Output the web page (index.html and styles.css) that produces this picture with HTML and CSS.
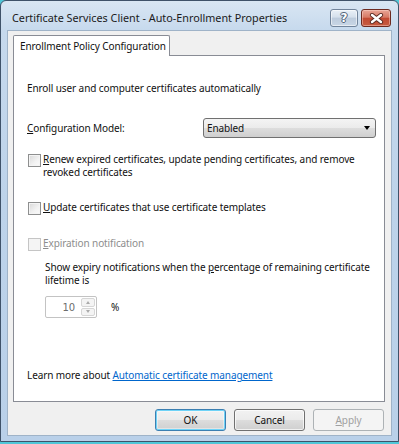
FILE: index.html
```html
<!DOCTYPE html>
<html>
<head>
<meta charset="utf-8">
<link rel="stylesheet" href="styles.css">
</head>
<body>
<div class="window">
  <div class="titlebar">
    <span class="title">Certificate Services Client - Auto-Enrollment Properties</span>
    <div class="caption-btns">
      <div class="cbtn help"><span class="q">?</span></div>
      <div class="cbtn close">
        <svg width="15" height="11" viewBox="0 0 15 11">
          <path d="M3 2 L12 9 M12 2 L3 9" stroke="#5a2a22" stroke-width="4.2" stroke-linecap="round"/>
          <path d="M3 2 L12 9 M12 2 L3 9" stroke="#ffffff" stroke-width="2.4" stroke-linecap="round"/>
        </svg>
      </div>
    </div>
  </div>
  <div class="client">
    <div class="tabs"><div class="tab">Enrollment Policy Configuration</div></div>
    <div class="panel">
      <p class="intro">Enroll user and computer certificates automatically</p>
      <div class="config">
        <span class="label"><u>C</u>onfiguration Model:</span>
        <div class="select"><span>Enabled</span><span class="arrow"></span></div>
      </div>
      <div class="check first"><span class="box"></span><span class="ctext"><u>R</u>enew expired certificates, update pending certificates, and remove<br>revoked certificates</span></div>
      <div class="check"><span class="box"></span><span class="ctext"><u>U</u>pdate certificates that use certificate templates</span></div>
      <div class="check disabled"><span class="box"></span><span class="ctext"><u>E</u>xpiration notification</span></div>
      <p class="expiry">Show expiry notifications when the <u>p</u>ercentage of remaining certificate<br>lifetime is</p>
      <div class="spinrow">
        <div class="spin"><span class="val">10</span><div class="spinbtns"><span class="sb up"></span><span class="sb down"></span></div></div>
        <span class="pct">%</span>
      </div>
      <p class="learn">Learn more about <a href="#">Automatic certificate management</a></p>
    </div>
    <div class="buttons">
      <div class="btn default">OK</div>
      <div class="btn">Cancel</div>
      <div class="btn off"><u>A</u>pply</div>
    </div>
  </div>
</div>
</body>
</html>
```

FILE: styles.css
```css
* { box-sizing: border-box; }
html, body { margin: 0; padding: 0; }
body {
  width: 399px; height: 444px; overflow: hidden;
  background: #4fc7d8;
  font-family: "Noto Sans", sans-serif;
  font-size: 10px;
  letter-spacing: -0.1px;
  color: #111;
  white-space: nowrap;
}
.window {
  width: 399px; height: 442px;
  border: 1px solid #3f5269;
  border-radius: 6px 6px 0 0;
  background: linear-gradient(to bottom, #d9e6f3 0px, #c6d9ed 30px, #bdd3ea 200px, #b9d0e9 100%);
  padding: 0 6px 5px 6px;
  display: flex; flex-direction: column;
}
.titlebar {
  height: 29px; flex: none;
  display: flex; align-items: center; justify-content: space-between;
  padding-left: 5px;
}
.title { color: #1b1b1b; font-size: 10.8px; letter-spacing: 0; margin-top: 3px; }
.caption-btns { display: flex; gap: 3px; align-self: flex-start; margin-top: 8px; margin-right: 1px; }
.cbtn {
  height: 18px; border-radius: 3px;
  display: flex; align-items: center; justify-content: center;
}
.help {
  width: 28px;
  border: 1px solid #71849b;
  background: linear-gradient(to bottom, #e9f0f7 0%, #d5e0ec 45%, #bccbdc 50%, #c9d7e6 100%);
  box-shadow: inset 0 0 0 1px rgba(255,255,255,0.55);
}
.q {
  font-family: "DejaVu Sans", sans-serif; font-weight: bold; font-size: 12px;
  color: #fff; line-height: 1;
  text-shadow: 0 0 1px #4a5a70, 0 0 1px #4a5a70, 1px 0 0 #5a6a80, -1px 0 0 #5a6a80, 0 1px 0 #5a6a80, 0 -1px 0 #5a6a80;
}
.close {
  width: 30px;
  border: 1px solid #6d2a20;
  background: linear-gradient(to bottom, #e8a596 0%, #d77a66 45%, #c24a33 52%, #c65b40 100%);
  box-shadow: inset 0 0 0 1px rgba(255,220,210,0.45);
}
.client {
  flex: 1;
  background: #f0f0f0;
  border: 1px solid #9fb3c8;
  padding: 4px 6px 0 5px;
  display: flex; flex-direction: column;
}
.tabs { display: flex; height: 21px; position: relative; z-index: 1; }
.tab {
  background: #fff;
  border: 1px solid #898c95; border-bottom: none;
  border-radius: 2px 2px 0 0;
  padding: 0 6px;
  width: 157px;
  line-height: 20px; height: 21px;
  color: #111;
}
.panel {
  height: 347px;
  margin-top: -1px;
  background: #fff;
  border: 1px solid #898c95;
  padding: 0 8px 0 13px;
  display: flex; flex-direction: column;
}
p { margin: 0; }
.intro { margin-top: 26px; line-height: 13px; }
.config { display: flex; align-items: center; justify-content: space-between; margin-top: 23px; }
.select {
  width: 173px; height: 20px;
  border: 1px solid #707070; border-radius: 3px;
  background: linear-gradient(to bottom, #f4f4f4 0%, #ebebeb 50%, #dddddd 51%, #cfcfcf 100%);
  display: flex; align-items: center; justify-content: space-between;
  padding: 0 5px 0 3px;
}
.arrow {
  width: 0; height: 0;
  border-left: 3.5px solid transparent; border-right: 3.5px solid transparent;
  border-top: 4px solid #000;
}
.check { display: flex; align-items: flex-start; margin-top: 22px; line-height: 13px; }
.check.first { margin-top: 15px; }
.box {
  width: 13px; height: 13px; flex: none;
  margin-left: 1px; margin-right: 2px; margin-top: 1px;
  border: 1px solid #8e8f8f;
  background: linear-gradient(135deg, #d8d8d8 0%, #f2f2f2 60%, #fafafa 100%);
  box-shadow: inset 0 0 0 1px #f4f4f4;
}
.disabled { color: #8d8d8d; }
.disabled .box { border-color: #c5c5c5; background: #f4f4f4; box-shadow: none; }
.expiry { margin-top: 10px; margin-left: 18px; line-height: 13px; }
.spinrow { display: flex; align-items: center; margin-top: 9px; margin-left: 18px; }
.spin {
  width: 52px; height: 22px;
  border: 1px solid #c3c3c3; border-radius: 2px;
  background: #fff;
  display: flex; align-items: center; justify-content: flex-end;
  padding: 1px;
  color: #6d6d6d;
}
.val { margin-right: 6px; font-family: "DejaVu Sans", sans-serif; font-size: 10px; }
.spinbtns { display: flex; flex-direction: column; gap: 1px; height: 18px; }
.sb {
  width: 14px; height: 9px;
  border: 1px solid #d6d6d6; border-radius: 2px;
  background: #f4f4f4;
  display: flex; align-items: center; justify-content: center;
}
.sb::after {
  content: ""; width: 0; height: 0;
  border-left: 2.5px solid transparent; border-right: 2.5px solid transparent;
}
.up::after { border-bottom: 3px solid #aaaaaa; }
.down::after { border-top: 3px solid #aaaaaa; }
.pct { margin-left: 14px; }
.learn { margin-top: auto; margin-bottom: 19px; line-height: 13px; }
.learn a { color: #0066cc; text-decoration: underline; }
.buttons { display: flex; justify-content: flex-end; gap: 8px; margin-top: 7px; padding-right: 1px; }
.btn {
  width: 71px; height: 22px;
  border: 1px solid #707070; border-radius: 3px;
  background: linear-gradient(to bottom, #f2f2f2 0%, #ebebeb 50%, #dddddd 51%, #cfcfcf 100%);
  box-shadow: inset 0 0 0 1px rgba(255,255,255,0.7);
  display: flex; align-items: center; justify-content: center;
  color: #111;
}
.btn.default { border-color: #3c7fb1; box-shadow: inset 0 0 0 1px #6fd3f7, inset 0 0 0 2px rgba(255,255,255,0.4); }
.btn.off { border-color: #adb2b5; background: #f4f4f4; box-shadow: none; color: #a0a0a0; }
```
